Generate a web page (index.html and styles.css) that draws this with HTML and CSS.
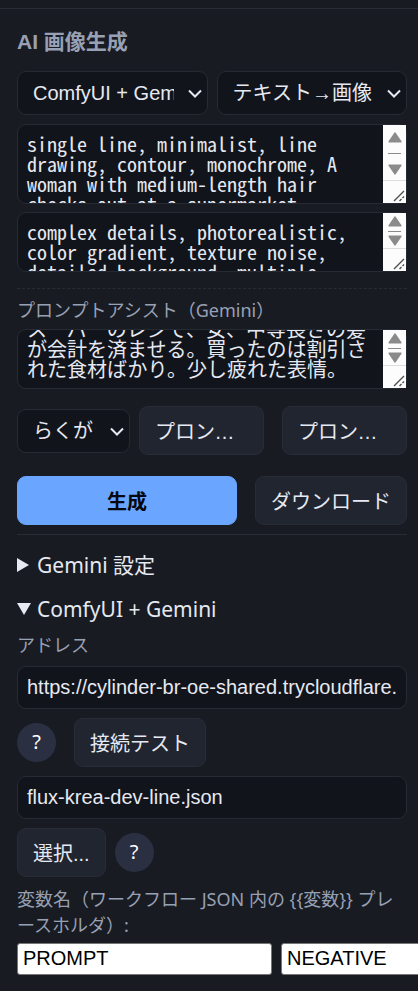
FILE: index.html
```html
<!DOCTYPE html>
<html lang="ja">
<head>
<meta charset="utf-8">
<meta name="viewport" content="width=device-width, initial-scale=1">
<title>AI 画像生成</title>
<link rel="stylesheet" href="styles.css">
</head>
<body>
<svg width="0" height="0" class="defs" aria-hidden="true">
  <symbol id="chevron" viewBox="0 0 14 9"><path d="M1 1.5 7 7.5 13 1.5" fill="none" stroke="currentColor" stroke-width="2"/></symbol>
  <symbol id="up" viewBox="0 0 14 11"><path d="M7 1.2 12.8 9.8H1.2Z" fill="#8b8b8b" stroke="#8b8b8b" stroke-width="1.6" stroke-linejoin="round"/></symbol>
  <symbol id="down" viewBox="0 0 14 11"><path d="M7 9.8 12.8 1.2H1.2Z" fill="#8b8b8b" stroke="#8b8b8b" stroke-width="1.6" stroke-linejoin="round"/></symbol>
  <symbol id="grip" viewBox="0 0 12 12"><path d="M1 11 11 1M6.5 11 8.5 9M9.5 8 11 6.5" fill="none" stroke="#505050" stroke-width="1.4"/></symbol>
</svg>
<main class="panel">
  <h2 class="title">AI 画像生成</h2>
  <div class="row">
    <div class="select grow">
      <select aria-label="エンジン"><option>ComfyUI + Gemini</option></select>
      <svg class="chevron"><use href="#chevron"/></svg>
    </div>
    <div class="select grow">
      <select aria-label="モード"><option>テキスト→画像</option></select>
      <svg class="chevron"><use href="#chevron"/></svg>
    </div>
  </div>
  <div class="area tall">
    <textarea class="mono" aria-label="プロンプト">single line, minimalist, line drawing, contour, monochrome, A woman with medium-length hair checks out at a supermarket register</textarea>
    <div class="scroll"><div class="track"><svg class="arrow"><use href="#up"/></svg><i></i><svg class="arrow"><use href="#down"/></svg></div><svg class="grip"><use href="#grip"/></svg></div>
  </div>
  <div class="area">
    <textarea class="mono" aria-label="ネガティブプロンプト">complex details, photorealistic, color gradient, texture noise, detailed background, multiple lines</textarea>
    <div class="scroll"><div class="track"><svg class="arrow"><use href="#up"/></svg><i></i><svg class="arrow"><use href="#down"/></svg></div><svg class="grip"><use href="#grip"/></svg></div>
  </div>
  <section class="assist">
    <label class="label" for="assist">プロンプトアシスト（Gemini）</label>
    <div class="area">
      <textarea id="assist">スーパーのレジで、女、中等長さの髪が会計を済ませる。買ったのは割引された食材ばかり。少し疲れた表情。</textarea>
      <div class="scroll"><div class="track"><svg class="arrow"><use href="#up"/></svg><i></i><svg class="arrow"><use href="#down"/></svg></div><svg class="grip"><use href="#grip"/></svg></div>
    </div>
  </section>
  <div class="row tools">
    <div class="select">
      <select aria-label="スタイル"><option>らくがき</option></select>
      <svg class="chevron"><use href="#chevron"/></svg>
    </div>
    <div class="pair">
      <button class="btn clip" type="button">プロンプト生成</button>
      <button class="btn clip" type="button">プロンプト翻訳</button>
    </div>
  </div>
  <div class="actions">
    <button class="btn primary" type="button">生成</button>
    <button class="btn" type="button">ダウンロード</button>
  </div>
  <section class="settings">
    <details><summary>Gemini 設定</summary></details>
    <details open>
      <summary>ComfyUI + Gemini</summary>
      <label class="label" for="address">アドレス</label>
      <input class="field" id="address" type="text" value="https://cylinder-br-oe-shared.trycloudflare.com">
      <div class="row wide">
        <button class="help" type="button">?</button>
        <button class="btn" type="button">接続テスト</button>
      </div>
      <input class="field" type="text" aria-label="ワークフロー" value="flux-krea-dev-line.json">
      <div class="row">
        <button class="btn" type="button">選択...</button>
        <button class="help" type="button">?</button>
      </div>
      <p class="label vars">変数名（ワークフロー JSON 内の {{変数}} プレースホルダ）:</p>
      <div class="names">
        <input type="text" aria-label="プロンプト変数" value="PROMPT">
        <input type="text" aria-label="ネガティブ変数" value="NEGATIVE">
      </div>
    </details>
  </section>
</main>
<script src="script.js"></script>
</body>
</html>
```
FILE: styles.css
```css
* { box-sizing: border-box; }
html { background: #181b22; }
body {
  margin: 0;
  padding-top: 8px;
  overflow-x: hidden;
  color: #e6e9f2;
  font: 21px/32px "Noto Sans", "Noto Sans CJK JP", sans-serif;
}
button, input, select, textarea {
  margin: 0;
  color: #e6e9f2;
  font: 20px/24px "Liberation Sans", "Noto Sans CJK JP", sans-serif;
}
.defs { position: absolute; }
.panel {
  padding: 17px 11px 16px 17px;
  border-top: 1px solid #282c35;
}
.title {
  margin: 0 0 13px;
  color: #98a0b4;
  font: bold 21px/32px "Liberation Sans", "Noto Sans CJK JP", sans-serif;
}
.row { display: flex; align-items: center; gap: 9px; }
.select { position: relative; width: 113px; flex: none; }
.grow { flex: 1 1 0; }
.select select {
  display: block;
  width: 100%;
  height: 44px;
  padding: 0 33px 0 15px;
  border: 1px solid #262a33;
  border-radius: 9px;
  background: #11141b;
  appearance: none;
  text-overflow: clip;
}
.chevron {
  position: absolute;
  top: 18px;
  right: 6px;
  width: 14px;
  height: 9px;
  pointer-events: none;
}
.area {
  position: relative;
  height: 60px;
  margin-top: 8px;
  border: 1px solid #262a33;
  border-radius: 9px;
  background: #11141b;
}
.area.tall { height: 80px; margin-top: 9px; }
.area textarea {
  display: block;
  width: 100%;
  height: 100%;
  padding: 9px 32px 9px 9px;
  border: 0;
  background: none;
  resize: none;
  overflow: hidden;
  outline: 0;
  font: 20px/20px "Noto Sans CJK JP", sans-serif;
}
.area .mono { font-feature-settings: "hwid"; }
.scroll {
  position: absolute;
  inset: 0 0 0 auto;
  width: 23px;
  display: flex;
  flex-direction: column;
  background: #fcfcfc;
}
.track {
  flex: 1;
  display: flex;
  flex-direction: column;
  align-items: center;
  justify-content: space-between;
  padding: 3px 0 2px;
  border-bottom: 1px solid #dcdcdc;
}
.tall .track { padding: 7px 0 5px; }
.track i { width: 13px; height: 1px; background: #8b8b8b; }
.arrow { width: 14px; height: 11px; }
.grip { width: 12px; height: 12px; margin: 9px 1px 1px 10px; }
.assist { margin-top: 16px; padding-top: 8px; border-top: 1px dashed #282c35; }
.label { display: block; color: #98a0b4; font-size: 18px; line-height: 26px; }
.assist .area { margin-top: 6px; }
.tools { margin-top: 17px; }
.pair { flex: 1; min-width: 0; display: grid; grid-template-columns: 1fr 1fr; gap: 18px; }
.btn {
  height: 49px;
  padding: 2px 15px 0;
  border: 1px solid #282c36;
  border-radius: 9px;
  background: #212530;
  white-space: nowrap;
}
.clip { min-width: 0; overflow: hidden; text-overflow: ellipsis; text-align: left; }
.actions { display: flex; gap: 18px; margin-top: 21px; }
.primary { flex: 1; border-color: #6aa5ff; background: #6aa5ff; color: #05080f; font-weight: bold; }
.settings { margin-top: 9px; padding-top: 14px; border-top: 1px solid #282c35; }
summary { display: flex; align-items: center; margin-bottom: 12px; }
summary::before {
  content: "";
  width: 12px;
  height: 14px;
  margin-right: 8px;
  background: currentColor;
  clip-path: polygon(0 0, 100% 50%, 0 100%);
}
details[open] summary { margin-bottom: 7px; }
details[open] summary::before {
  width: 14px;
  height: 12px;
  margin-right: 6px;
  clip-path: polygon(0 0, 100% 0, 50% 100%);
}
.field {
  display: block;
  width: 100%;
  height: 43px;
  padding: 0 9px;
  border: 1px solid #262a33;
  border-radius: 9px;
  background: #11141b;
}
.label + .field { margin-top: 8px; }
details .row { margin: 9px 0; }
.wide { gap: 18px; }
.help {
  width: 39px;
  height: 39px;
  padding: 0 0 2px;
  border: 0;
  border-radius: 50%;
  background: #2a3042;
  color: #fff;
  font-family: "Noto Sans", sans-serif;
}
.vars { margin: 0 0 5px; }
.names { display: flex; gap: 9px; margin-right: -11px; overflow: hidden; }
.names input {
  flex: none;
  width: 255px;
  height: 32px;
  padding: 0 5px 2px;
  border: 1px solid #767676;
  border-radius: 3px;
  background: #fff;
  color: #000;
}
```
FILE: script.js
```js
const assist = document.getElementById("assist");
assist.scrollTop = assist.scrollHeight;
```
